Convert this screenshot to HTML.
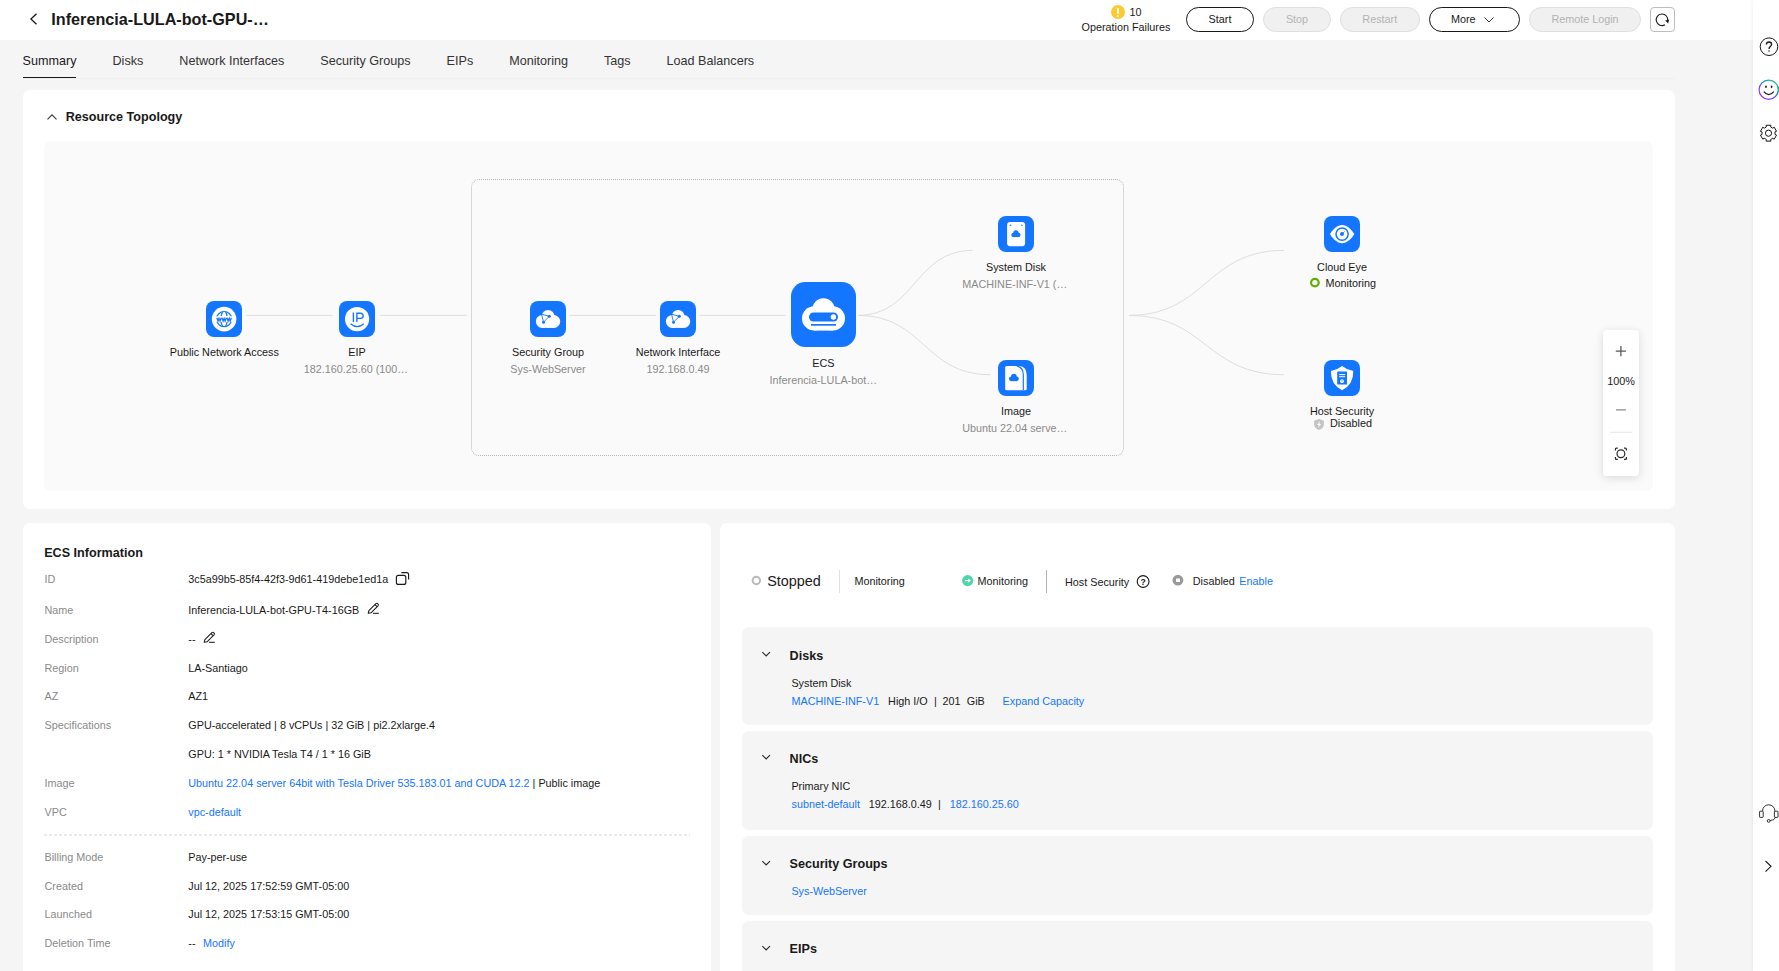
<!DOCTYPE html>
<html>
<head>
<meta charset="utf-8">
<title>ECS</title>
<style>
*{box-sizing:border-box;margin:0;padding:0}
html,body{width:1779px;height:971px;overflow:hidden;background:#f5f5f5;font-family:"Liberation Sans",sans-serif;color:#191919;font-size:10.8px}
.abs{position:absolute}
#hdr{position:absolute;left:0;top:0;width:1753px;height:40px;background:#fff}
#title{position:absolute;left:51.3px;top:9px;font-size:16.2px;font-weight:bold;line-height:21px;white-space:nowrap;color:#191919}
.btn{position:absolute;top:7px;height:25px;border:1px solid #191919;border-radius:13px;background:#fff;font-size:10.8px;line-height:23px;text-align:center;color:#191919}
.btn.dis{border-color:#dfdfdf;background:#f0f0f0;color:#b3b3b3}
#tabs{position:absolute;left:22.6px;top:54px;display:flex;gap:36px;font-size:12.6px;line-height:15px;color:#333;white-space:nowrap}
#tabs .on{color:#191919}
.card{position:absolute;background:#fff;border-radius:7px}
.lbl{position:absolute;left:44.5px;color:#8a8a8a;font-size:10.8px;line-height:13px;white-space:nowrap}
.val{position:absolute;left:188.3px;color:#191919;font-size:10.8px;line-height:13px;white-space:nowrap}
a,.lk{color:#1476ff;text-decoration:none}
.sub{position:absolute;left:742px;width:911px;background:#f5f5f5;border-radius:7px}
.sub h3{position:absolute;left:47.6px;top:21px;font-size:12.6px;font-weight:bold;line-height:15px;color:#191919}
.sub .t{position:absolute;left:49.4px;font-size:10.8px;line-height:13px;white-space:nowrap}
.node{position:absolute;text-align:center;font-size:10.8px;line-height:13px;white-space:nowrap;transform:translateX(-50%)}
.node .s{color:#8a8a8a}
.ic{position:absolute;width:36px;height:36px;border-radius:8px;background:#1476ff}
#side{position:absolute;left:1753px;top:0;width:26px;height:971px;background:#fff;box-shadow:-1px 0 3px rgba(0,0,0,.06)}
</style>
</head>
<body>
<div id="hdr">
  <svg class="abs" style="left:28px;top:11.4px" width="12" height="16" viewBox="0 0 12 16"><path d="M8.5 2.7 L2.9 8 L8.5 13.3" fill="none" stroke="#191919" stroke-width="1.3"/></svg>
  <div id="title">Inferencia-LULA-bot-GPU-…</div>
  <div class="abs" style="left:1111px;top:5px;width:14px;height:14px;border-radius:7px;background:#fdca30"></div>
  <div class="abs" style="left:1117px;top:7.5px;width:2px;height:6px;background:#fff;border-radius:1px"></div>
  <div class="abs" style="left:1117px;top:14.5px;width:2px;height:2px;background:#fff;border-radius:1px"></div>
  <div class="abs" style="left:1129.5px;top:6px;font-size:10.8px;line-height:13px">10</div>
  <div class="abs" style="left:1081.5px;top:21px;font-size:10.8px;line-height:13px;white-space:nowrap">Operation Failures</div>
  <div class="btn" style="left:1186px;width:68px">Start</div>
  <div class="btn dis" style="left:1263px;width:68px">Stop</div>
  <div class="btn dis" style="left:1340px;width:79.5px">Restart</div>
  <div class="btn" style="left:1429px;width:91px;text-align:left;padding-left:21px">More</div>
  <svg class="abs" style="left:1483.3px;top:14.9px" width="12" height="10" viewBox="0 0 12 10"><path d="M1.5 2.5 L6 7 L10.5 2.5" fill="none" stroke="#333" stroke-width="1"/></svg>
  <div class="btn dis" style="left:1529px;width:112px">Remote Login</div>
  <div class="abs" style="left:1650px;top:7px;width:25px;height:25px;border:1px solid #bdbdbd;border-radius:4px;background:#fff"></div>
  <svg class="abs" style="left:1654px;top:11px" width="17" height="17" viewBox="0 0 17 17"><path d="M10.9 13.8 A5.8 5.8 0 1 1 13.7 9.9" fill="none" stroke="#191919" stroke-width="1.1"/><path d="M11.3 9.6 L15.1 8.6 L14.1 12.5 Z" fill="#191919"/></svg>
</div>

<div id="tabs"><span class="on">Summary</span><span>Disks</span><span>Network Interfaces</span><span>Security Groups</span><span>EIPs</span><span>Monitoring</span><span>Tags</span><span>Load Balancers</span></div>
<div class="abs" style="left:23px;top:78px;width:1652px;height:1px;background:#efefef"></div>
<div class="abs" style="left:23px;top:76.8px;width:53px;height:1.2px;background:#191919"></div>

<!-- topology card -->
<div class="card" style="left:23px;top:90px;width:1652px;height:418.7px"></div>
<svg class="abs" style="left:46px;top:111.1px" width="12" height="12" viewBox="0 0 12 12"><path d="M1.5 8.3 L6 3.8 L10.5 8.3" fill="none" stroke="#3a3a3a" stroke-width="1.15"/></svg>
<div class="abs" style="left:65.7px;top:110px;font-size:12.6px;font-weight:bold;line-height:15px;white-space:nowrap">Resource Topology</div>
<div class="abs" style="left:44px;top:141px;width:1609px;height:349.8px;background:#fafafa;border-radius:7px"></div>
<div id="topo">
<div class="abs" style="left:471px;top:179px;width:653px;height:277px;border:1px dotted #b6b6b6;border-radius:8px"></div>
<svg class="abs" style="left:0;top:0" width="1753" height="520" viewBox="0 0 1753 520">
  <defs>
    <g id="cloud36" fill="#fff"><circle cx="12.4" cy="20.4" r="6.5"/><circle cx="23.8" cy="20.5" r="6.4"/><circle cx="18.1" cy="15.2" r="6.3"/><rect x="12.4" y="18" width="11.4" height="8.9"/></g>
    <g id="net36"><use href="#cloud36"/><g stroke="#1476ff" stroke-width="0.9" fill="none"><path d="M11.6 13.2 L19.3 15.3 L13.5 21.2 Z"/></g><circle cx="19.3" cy="15.3" r="1.5" fill="#1476ff"/><circle cx="13.5" cy="21.2" r="1.5" fill="#1476ff"/><circle cx="11.6" cy="13.2" r="0.7" fill="#1476ff"/></g>
    <g id="minicloud" fill="#1476ff"><circle cx="-2.4" cy="0.9" r="2.2"/><circle cx="2.4" cy="0.9" r="2.2"/><circle cx="0" cy="-1.2" r="2.6"/><rect x="-2.4" y="0" width="4.8" height="3.1"/></g>
  </defs>
  <!-- dotted group box -->
  
  <!-- connector lines -->
  <g stroke="#dedede" stroke-width="1" fill="none">
    <path d="M246.6 315.4 H332.6"/><path d="M380.4 315.4 H466.8"/><path d="M569.5 315.4 H656"/><path d="M699.3 315.4 H785.5"/>
    <path d="M858.3 315.4 C915 315.4 915 250.3 972.6 250.3"/>
    <path d="M858.3 315.4 C924 315.4 924 374.8 990.6 374.8"/>
    <path d="M1129.2 315.4 C1206 315.4 1206 250.3 1284 250.3"/>
    <path d="M1129.2 315.4 C1206 315.4 1206 374.8 1284 374.8"/>
  </g>
  <!-- Public network access -->
  <g transform="translate(206 301)"><rect width="36" height="36" rx="8" fill="#1476ff"/><circle cx="18.1" cy="18.1" r="12.3" fill="#fff"/>
    <g fill="none" stroke="#1476ff" stroke-width="1.2"><circle cx="18.1" cy="18.1" r="7.6"/><path d="M16.6 10.9 Q15.3 13.4 15.1 15.2 M19.6 10.9 Q20.9 13.4 21.1 15.2 M16.6 25.3 Q15.3 22.8 15.1 21 M19.6 25.3 Q20.9 22.8 21.1 21"/></g>
    <rect x="9.4" y="15.3" width="17.4" height="5.6" fill="#fff"/>
    <path d="M10.8 16.5 L12.0 19.8 L13.0 17 L14.1 19.8 L15.2 16.5 M15.9 16.5 L17.1 19.8 L18.1 17 L19.1 19.8 L20.3 16.5 M21.0 16.5 L22.1 19.8 L23.2 17 L24.2 19.8 L25.4 16.5" fill="none" stroke="#1476ff" stroke-width="1.25" stroke-linejoin="miter" transform="translate(0 0.25)"/></g>
  <!-- EIP -->
  <g transform="translate(339 301)"><rect width="36" height="36" rx="8" fill="#1476ff"/><circle cx="18.1" cy="18.1" r="12.1" fill="#fff"/>
    <g fill="none" stroke="#1476ff" stroke-width="1.4"><path d="M14.4 11.5 V21.1"/><path d="M17.9 21.1 V12.2 H21.6 A2.6 2.6 0 0 1 21.6 17.4 H17.9"/><path d="M11.6 22.8 Q18.1 28.6 24.8 22.8" stroke-width="1.2"/></g></g>
  <!-- Security group -->
  <g transform="translate(530 301)"><rect width="36" height="36" rx="8" fill="#1476ff"/><use href="#net36"/></g>
  <!-- Network interface -->
  <g transform="translate(660 301)"><rect width="36" height="36" rx="8" fill="#1476ff"/><use href="#net36"/></g>
  <!-- ECS -->
  <g transform="translate(791 282)"><rect width="65" height="65" rx="14.4" fill="#1476ff"/>
    <g fill="#fff"><circle cx="23.2" cy="36.4" r="12.2"/><circle cx="41.8" cy="36.4" r="12.2"/><circle cx="32.5" cy="27.4" r="11.1"/><rect x="23" y="34" width="19" height="14.6"/></g>
    <rect x="18" y="30.5" width="29" height="9" rx="4.5" fill="#1476ff"/><circle cx="42.4" cy="35" r="2.7" fill="#fff"/><rect x="20" y="42" width="25" height="1.7" fill="#1476ff"/></g>
  <!-- System disk -->
  <g transform="translate(998 216)"><rect width="36" height="36" rx="8" fill="#1476ff"/><rect x="9.1" y="5.9" width="18" height="24.3" rx="3" fill="#fff"/><circle cx="12.5" cy="9.2" r="0.8" fill="#1476ff"/><circle cx="23.9" cy="9.2" r="0.8" fill="#1476ff"/><use href="#minicloud" transform="translate(17.9 18)"/></g>
  <!-- Image -->
  <g transform="translate(998 360)"><rect width="36" height="36" rx="8" fill="#1476ff"/>
    <path d="M19 5.9 H21 Q28.7 6.5 28.7 15 V28.7 Q28.7 30.2 27.2 30.2 H24 V13 Q24 7 19 5.9 Z" fill="#fff"/>
    <path d="M8.7 5.9 H17 Q24.8 6.4 24.8 14.5 V28.7 Q24.8 30.2 23.3 30.2 H8.7 Q7.2 30.2 7.2 28.7 V7.4 Q7.2 5.9 8.7 5.9 Z" fill="#fff" stroke="#1476ff" stroke-width="0"/>
    <path d="M19.2 6.2 Q25.3 7.6 25.3 15 V30" fill="none" stroke="#1476ff" stroke-width="1.2"/>
    <use href="#minicloud" transform="translate(15.9 17.8) scale(1.08)"/></g>
  <!-- Cloud eye -->
  <g transform="translate(1324 216)"><rect width="36" height="36" rx="8" fill="#1476ff"/><path d="M5.9 18.1 C7.6 15 12.4 8.9 18.1 8.9 C23.8 8.9 28.6 15 30.3 18.1 C28.6 21.2 23.8 27.3 18.1 27.3 C12.4 27.3 7.6 21.2 5.9 18.1 Z" fill="#fff"/><circle cx="18.1" cy="18.1" r="6.1" fill="none" stroke="#1476ff" stroke-width="1.5"/><circle cx="18" cy="18.1" r="2" fill="#1476ff"/><path d="M18 18.1 L20.8 15.4" stroke="#1476ff" stroke-width="0.8"/></g>
  <!-- Host security -->
  <g transform="translate(1324 360)"><rect width="36" height="36" rx="8" fill="#1476ff"/><path d="M18.1 5.9 Q22.5 9.6 29.3 11 Q29.6 24.5 18.1 30.2 Q6.6 24.5 6.9 11 Q13.7 9.6 18.1 5.9 Z" fill="#fff"/><rect x="13.2" y="11.5" width="9.8" height="13" rx="0.6" fill="#1476ff"/><rect x="15.1" y="14.1" width="6.1" height="1" fill="#fff"/><rect x="15.1" y="16.2" width="6.1" height="1" fill="#fff"/><circle cx="18" cy="21.2" r="1.9" fill="#fff"/><circle cx="18" cy="20.8" r="0.6" fill="#1476ff"/></g>
  <!-- status glyphs -->
  <circle cx="1314.9" cy="282.6" r="3.8" fill="#fff" stroke="#5bb000" stroke-width="2.2"/>
  <g transform="translate(1313.9 418.9)"><path d="M5.1 0 L10 1.9 V5.6 Q10 9.2 5.1 11 Q0.2 9.2 0.2 5.6 V1.9 Z" fill="#c4c4c4"/><path d="M6.2 2.4 L3.2 6 H5 L4.2 8.8 L7.2 5 H5.4 Z" fill="#fff"/></g>
</svg>
<div class="node" style="left:224.3px;top:345.5px">Public Network Access</div>
<div class="node" style="left:357px;top:345.5px">EIP</div>
<div class="node s8" style="left:303.7px;top:362.5px;transform:none;color:#8a8a8a">182.160.25.60 (100…</div>
<div class="node" style="left:548px;top:345.5px">Security Group</div>
<div class="node s" style="left:548px;top:362.5px;color:#8a8a8a">Sys-WebServer</div>
<div class="node" style="left:678px;top:345.5px">Network Interface</div>
<div class="node s" style="left:678px;top:362.5px;color:#8a8a8a">192.168.0.49</div>
<div class="node" style="left:823.3px;top:356.5px">ECS</div>
<div class="node" style="left:769.6px;top:373.5px;transform:none;color:#8a8a8a">Inferencia-LULA-bot…</div>
<div class="node" style="left:1016px;top:260.8px">System Disk</div>
<div class="node" style="left:962.3px;top:277.8px;transform:none;color:#8a8a8a">MACHINE-INF-V1 (…</div>
<div class="node" style="left:1016px;top:404.8px">Image</div>
<div class="node" style="left:962.3px;top:421.8px;transform:none;color:#8a8a8a">Ubuntu 22.04 serve…</div>
<div class="node" style="left:1342px;top:260.8px">Cloud Eye</div>
<div class="node" style="left:1325.6px;top:277px;transform:none">Monitoring</div>
<div class="node" style="left:1342px;top:404.8px">Host Security</div>
<div class="node" style="left:1330px;top:417px;transform:none">Disabled</div>
<!-- zoom control -->
<div class="abs" style="left:1603px;top:330px;width:36px;height:146px;background:#fff;border-radius:4px;box-shadow:0 2px 10px rgba(0,0,0,.13)"></div>
<svg class="abs" style="left:1603px;top:330px" width="36" height="146" viewBox="0 0 36 146"><g stroke="#575757" stroke-width="1.25" fill="none"><path d="M12.8 21.2 H23 M17.9 16.1 V26.3"/></g><path d="M13 79.9 H22.9" stroke="#7a7a7a" stroke-width="1.1"/><path d="M7 102.3 H29" stroke="#e6e6e6" stroke-width="1"/>
<g stroke="#2a2a2a" stroke-width="1.2" fill="none"><circle cx="17.9" cy="123.8" r="3.9"/><path d="M12.4 120.6 V119.2 Q12.4 118.2 13.4 118.2 H14.8 M21 118.2 H22.4 Q23.4 118.2 23.4 119.2 V120.6 M23.4 127 V128.4 Q23.4 129.4 22.4 129.4 H21 M14.8 129.4 H13.4 Q12.4 129.4 12.4 128.4 V127"/></g></svg>
<div class="abs" style="left:1603px;top:374.5px;width:36px;text-align:center;font-size:10.8px;line-height:13px">100%</div>
</div>

<!-- left info card -->
<div class="card" style="left:23px;top:523px;width:688px;height:460px"></div>
<div id="info">
<div class="abs" style="left:44.2px;top:545.53px;font-size:12.6px;font-weight:bold;line-height:15px;white-space:nowrap">ECS Information</div>
<div class="lbl" style="top:572.76px">ID</div>
<div class="val" style="top:572.76px">3c5a99b5-85f4-42f3-9d61-419debe1ed1a</div>
<div class="lbl" style="top:604.16px">Name</div>
<div class="val" style="top:604.16px">Inferencia-LULA-bot-GPU-T4-16GB</div>
<div class="lbl" style="top:632.96px">Description</div>
<div class="val" style="top:632.96px">--</div>
<div class="lbl" style="top:662.06px">Region</div>
<div class="val" style="top:662.06px">LA-Santiago</div>
<div class="lbl" style="top:690.36px">AZ</div>
<div class="val" style="top:690.36px">AZ1</div>
<div class="lbl" style="top:718.96px">Specifications</div>
<div class="val" style="top:718.96px">GPU-accelerated | 8 vCPUs | 32 GiB | pi2.2xlarge.4</div>
<div class="val" style="top:747.86px">GPU: 1 * NVIDIA Tesla T4 / 1 * 16 GiB</div>
<div class="lbl" style="top:776.96px">Image</div>
<div class="val" style="top:776.96px"><span class="lk">Ubuntu 22.04 server 64bit with Tesla Driver 535.183.01 and CUDA 12.2</span> | Public image</div>
<div class="lbl" style="top:806.06px">VPC</div>
<div class="val" style="top:806.06px"><span class="lk">vpc-default</span></div>
<div class="lbl" style="top:850.86px">Billing Mode</div>
<div class="val" style="top:850.86px">Pay-per-use</div>
<div class="lbl" style="top:880.06px">Created</div>
<div class="val" style="top:880.06px">Jul 12, 2025 17:52:59 GMT-05:00</div>
<div class="lbl" style="top:908.16px">Launched</div>
<div class="val" style="top:908.16px">Jul 12, 2025 17:53:15 GMT-05:00</div>
<div class="lbl" style="top:936.66px">Deletion Time</div>
<div class="val" style="top:936.66px">--&nbsp; <span class="lk" style="margin-left:1.5px">Modify</span></div>
<div class="abs" style="left:44px;top:834px;width:646px;height:2px;background:repeating-linear-gradient(90deg,#eaeaea 0,#eaeaea 3px,transparent 3px,transparent 5px)"></div>
<svg class="abs" style="left:394px;top:570px" width="17" height="17" viewBox="0 0 17 17"><g fill="none" stroke="#191919" stroke-width="1.15"><rect x="2.4" y="5.4" width="9.4" height="9" rx="2"/><path d="M7.4 2.6 H12.6 Q14.6 2.6 14.6 4.6 V9.4"/></g></svg>
<svg class="abs" style="left:367.2px;top:601.5px" width="14" height="14" viewBox="0 0 14 14"><g fill="none" stroke="#191919" stroke-width="1.05" stroke-linejoin="round"><path d="M1.2 11.3 L1.9 8.6 L8.9 1.6 Q9.9 0.8 10.9 1.8 Q11.9 2.8 11 3.8 L4 10.8 Z"/><path d="M8 2.6 L10 4.6"/><path d="M6 11.3 H11.8"/></g></svg>
<svg class="abs" style="left:203.4px;top:630.7px" width="14" height="14" viewBox="0 0 14 14"><g fill="none" stroke="#191919" stroke-width="1.05" stroke-linejoin="round"><path d="M1.2 11.3 L1.9 8.6 L8.9 1.6 Q9.9 0.8 10.9 1.8 Q11.9 2.8 11 3.8 L4 10.8 Z"/><path d="M8 2.6 L10 4.6"/><path d="M6 11.3 H11.8"/></g></svg>
</div><!--/info-->

<!-- right card -->
<div class="card" style="left:720px;top:523px;width:955px;height:460px"></div>
<div id="right">
<svg class="abs" style="left:750px;top:574px" width="13" height="13" viewBox="0 0 13 13"><circle cx="6.3" cy="6.5" r="3.7" fill="none" stroke="#b9b9b9" stroke-width="2"/></svg>
<div class="abs" style="left:767.2px;top:572.61px;font-size:14.4px;line-height:17px;white-space:nowrap">Stopped</div>
<div class="abs" style="left:839px;top:570px;width:1px;height:23px;background:#e2e2e2"></div>
<div class="abs" style="left:854.4px;top:574.66px;line-height:13px;white-space:nowrap">Monitoring</div>
<svg class="abs" style="left:962px;top:574.9px" width="12" height="12" viewBox="0 0 12 12"><circle cx="5.65" cy="5.6" r="5.55" fill="#50d4ab"/><path d="M3 5.6 H7.2" fill="none" stroke="#fff" stroke-width="1.2"/><path d="M6.3 3.5 L8.9 5.6 L6.3 7.7 Z" fill="#fff"/></svg>
<div class="abs" style="left:977.6px;top:574.66px;line-height:13px;white-space:nowrap">Monitoring</div>
<div class="abs" style="left:1046px;top:570px;width:1px;height:23px;background:#b2b2b2"></div>
<div class="abs" style="left:1065px;top:576.36px;line-height:13px;white-space:nowrap">Host Security</div>
<svg class="abs" style="left:1136px;top:575px" width="14" height="14" viewBox="0 0 14 14"><circle cx="7.1" cy="6.5" r="5.9" fill="none" stroke="#191919" stroke-width="1.1"/><text x="7.1" y="9.6" font-family="Liberation Sans" font-size="8.6" font-weight="bold" text-anchor="middle" fill="#191919">?</text></svg>
<svg class="abs" style="left:1171.8px;top:573.8px" width="12" height="12" viewBox="0 0 12 12"><circle cx="5.9" cy="6.2" r="5.4" fill="#999"/><rect x="4" y="4.6" width="4" height="3.4" rx="0.4" fill="#fff"/></svg>
<div class="abs" style="left:1192.8px;top:574.66px;line-height:13px;white-space:nowrap">Disabled</div>
<div class="abs lk" style="left:1239.3px;top:574.66px;line-height:13px;white-space:nowrap">Enable</div>
<div class="sub" style="top:627px;height:98px"><svg class="abs" style="left:18px;top:21.2px" width="12" height="12" viewBox="0 0 12 12"><path d="M2.3 4.1 L6.15 7.95 L10 4.1" fill="none" stroke="#2a2a2a" stroke-width="1.15"/></svg><h3 style="top:21.53px">Disks</h3><div class="t" style="top:49.96px">System Disk</div><div class="t" style="top:68.16px"><span class="lk" style="position:absolute;left:0.2px">MACHINE-INF-V1</span><span class="" style="position:absolute;left:96.7px">High I/O</span><span class="" style="position:absolute;left:142.7px">|</span><span class="" style="position:absolute;left:151px">201</span><span class="" style="position:absolute;left:175.4px">GiB</span><span class="lk" style="position:absolute;left:211.2px">Expand Capacity</span></div></div>
<div class="sub" style="top:731px;height:99px"><svg class="abs" style="left:18px;top:20.2px" width="12" height="12" viewBox="0 0 12 12"><path d="M2.3 4.1 L6.15 7.95 L10 4.1" fill="none" stroke="#2a2a2a" stroke-width="1.15"/></svg><h3 style="top:20.53px">NICs</h3><div class="t" style="top:48.96px">Primary NIC</div><div class="t" style="top:67.06px"><span class="lk" style="position:absolute;left:0.2px">subnet-default</span><span class="" style="position:absolute;left:77.4px">192.168.0.49</span><span class="" style="position:absolute;left:146.6px">|</span><span class="lk" style="position:absolute;left:158.4px">182.160.25.60</span></div></div>
<div class="sub" style="top:836px;height:79px"><svg class="abs" style="left:18px;top:20.8px" width="12" height="12" viewBox="0 0 12 12"><path d="M2.3 4.1 L6.15 7.95 L10 4.1" fill="none" stroke="#2a2a2a" stroke-width="1.15"/></svg><h3 style="top:21.13px">Security Groups</h3><div class="t" style="top:49.46px"><span class="lk">Sys-WebServer</span></div></div>
<div class="sub" style="top:921px;height:80px"><svg class="abs" style="left:18px;top:20.7px" width="12" height="12" viewBox="0 0 12 12"><path d="M2.3 4.1 L6.15 7.95 L10 4.1" fill="none" stroke="#2a2a2a" stroke-width="1.15"/></svg><h3 style="top:21.03px">EIPs</h3></div>
</div><!--/right-->

<div id="side">
<svg class="abs" style="left:0;top:0" width="26" height="971" viewBox="1753 0 26 971">
<defs><linearGradient id="sg" x1="0" y1="0" x2="1" y2="1"><stop offset="0" stop-color="#2b6cff"/><stop offset="0.45" stop-color="#17b68c"/><stop offset="1" stop-color="#a030e8"/></linearGradient>
<linearGradient id="sg2" x1="1" y1="0" x2="0.25" y2="1"><stop offset="0" stop-color="#12b886"/><stop offset="0.25" stop-color="#19b2a0"/><stop offset="0.55" stop-color="#3366ff"/><stop offset="1" stop-color="#b02de6"/></linearGradient></defs>
<g fill="none" stroke="#191919" stroke-width="1">
<circle cx="1769" cy="46.7" r="8.8"/>
<path d="M1766.4 44.6 Q1766.5 42 1769 42 Q1771.6 42 1771.6 44.3 Q1771.6 45.6 1770.2 46.6 Q1769 47.4 1769 48.9" stroke-width="1.3"/>
</g>
<circle cx="1769" cy="51.1" r="0.75" fill="#191919"/>
<circle cx="1768.7" cy="89.7" r="9.6" fill="none" stroke="url(#sg2)" stroke-width="1.2"/>
<ellipse cx="1766" cy="86.7" rx="0.85" ry="1.3" fill="#191919"/><ellipse cx="1771.6" cy="86.7" rx="0.85" ry="1.3" fill="#191919"/>
<path d="M1763.8 91.6 Q1768.7 97.6 1773.8 91.6" fill="none" stroke="#191919" stroke-width="1.25"/>
<rect x="1778" y="86.5" width="1.5" height="6" rx="0.7" fill="#19b28f"/>
<g fill="none" stroke="#191919" stroke-width="1" stroke-linejoin="round">
<path d="M1766.07 125.26 L1770.93 125.26 L1770.65 126.96 L1772.83 128.22 L1774.16 127.13 L1776.59 131.33 L1774.98 131.94 L1774.98 134.46 L1776.59 135.07 L1774.16 139.27 L1772.83 138.18 L1770.65 139.44 L1770.93 141.14 L1766.07 141.14 L1766.35 139.44 L1764.17 138.18 L1762.84 139.27 L1760.41 135.07 L1762.02 134.46 L1762.02 131.94 L1760.41 131.33 L1762.84 127.13 L1764.17 128.22 L1766.35 126.96 Z" stroke-linejoin="round"/>
<circle cx="1768.5" cy="133.2" r="3.1"/>
</g>
<g fill="none" stroke="#191919" stroke-width="0.9">
<path d="M1762.6 811.2 V810.6 A6.1 5.8 0 0 1 1774.8 810.6 V811.2"/>
<rect x="1759.6" y="811.2" width="3.6" height="6.2" rx="0.6"/><rect x="1774.4" y="811.2" width="3.6" height="6.2" rx="0.6"/>
<path d="M1775.6 817.4 Q1774.8 820 1770.2 820.6"/><circle cx="1768.7" cy="820.9" r="1.4"/>
<path d="M1765.5 861 L1771 866.3 L1765.5 871.7" stroke-width="1.1"/>
</g>
</svg>
</div>
</body>
</html>
